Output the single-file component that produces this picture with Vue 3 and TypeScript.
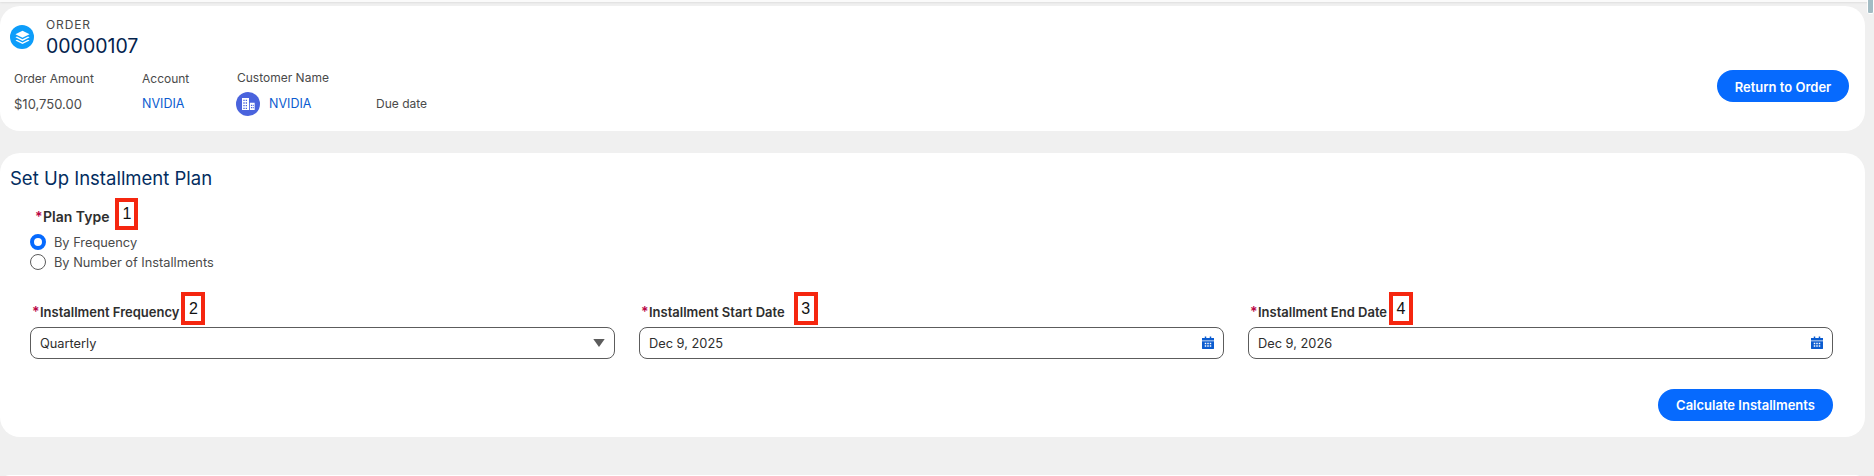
<script setup lang="ts">
interface Field { label: string; value: string; num: string; kind: 'select' | 'date'; tagGap: number }
const fields: Field[] = [
  { label: 'Installment Frequency', value: 'Quarterly', num: '2', kind: 'select', tagGap: 2 },
  { label: 'Installment Start Date', value: 'Dec 9, 2025', num: '3', kind: 'date', tagGap: 9 },
  { label: 'Installment End Date', value: 'Dec 9, 2026', num: '4', kind: 'date', tagGap: 2 },
]
</script>

<template>
  <div class="page">
    <div class="topbar"></div>
    <div class="thumb"></div>

    <section class="card head">
      <div class="head-main">
        <div class="title-row">
          <span class="order-icon">
            <svg viewBox="0 0 24 24" width="17" height="17" fill="#fff">
              <path d="M12 2.500 22 7.500l-10 5-10-5z" />
              <path d="M4.200 10.500 12 14.500l7.800-4L22 11.700 12 16.900 2 11.700z" />
              <path d="M4.200 15 12 19l7.800-4 2.200 1.200-10 5.100-10-5.100z" />
            </svg>
          </span>
          <div class="titles">
            <div class="eyebrow">ORDER</div>
            <div class="order-no">00000107</div>
          </div>
        </div>
        <div class="meta">
          <div class="col col-amount">
            <div class="meta-label">Order Amount</div>
            <div class="meta-value amount">$10,750.00</div>
          </div>
          <div class="col col-account">
            <div class="meta-label">Account</div>
            <div class="meta-value link">NVIDIA</div>
          </div>
          <div class="col col-customer">
            <div class="meta-label up">Customer Name</div>
            <div class="customer">
              <span class="avatar">
                <svg viewBox="0 0 24 24" width="16" height="16" fill="#fff">
                  <path fill-rule="evenodd" d="M3 3h10.500v18H3zM5 5.500v2h2v-2zm3.500 0v2h2v-2zM5 9.500v2h2v-2zm3.500 0v2h2v-2zM5 13.500v2h2v-2zm3.500 0v2h2v-2zM5 17.500v2h2v-2zm3.500 0v2h2v-2z" />
                  <path fill-rule="evenodd" d="M14.800 10H22v11h-7.200zm1.600 3v2H18v-2zm2.600 0v2h1.600v-2zm-2.600 3.500v2H18v-2zm2.600 0v2h1.600v-2z" />
                </svg>
              </span>
              <span class="link">NVIDIA</span>
            </div>
          </div>
          <div class="col col-due">
            <div class="meta-value">Due date</div>
          </div>
        </div>
      </div>
      <button class="btn return">Return to Order</button>
    </section>

    <section class="card plan">
      <h2 class="plan-title">Set Up Installment Plan</h2>
      <div class="plan-type">
        <div class="label-row type-label">
          <span class="star">*</span><span class="label type-text">Plan Type</span>
          <span class="tag tag-1">1</span>
        </div>
        <label class="radio-row"><span class="radio on"></span>By Frequency</label>
        <label class="radio-row"><span class="radio"></span>By Number of Installments</label>
      </div>

      <div class="fields">
        <div v-for="f in fields" :key="f.num" class="field">
          <div class="label-row">
            <span class="star">*</span><span class="label">{{ f.label }}</span>
            <span class="tag" :style="{ marginLeft: f.tagGap + 'px' }">{{ f.num }}</span>
          </div>
          <div class="input">
            <span>{{ f.value }}</span>
            <svg v-if="f.kind === 'select'" class="caret" viewBox="0 0 10 7" width="12" height="8" fill="#5c5c5c">
              <path d="M0 0h10L5 7z" />
            </svg>
            <svg v-else class="cal" viewBox="0 0 13 14" width="12" height="14" fill="#0b5cd0">
              <path fill-rule="evenodd" d="M3 0h1.600v1.600h3.800V0H10v1.600h3v2.600H0V1.600h3zM0 5h13v7.600a1 1 0 0 1-1 1H1a1 1 0 0 1-1-1zm3 1.800v1.500h1.600V6.800zm2.700 0v1.500h1.600V6.800zm2.700 0v1.500H10V6.800zM3 9.500V11h1.600V9.500zm2.700 0V11h1.600V9.500zm2.700 0V11H10V9.500z" />
            </svg>
          </div>
        </div>
      </div>

      <div class="actions">
        <button class="btn calc">Calculate Installments</button>
      </div>
    </section>

    <div class="card tail"></div>
  </div>
</template>

<style>
html, body { margin: 0; background: #f0f0f0; overflow: hidden; }
</style>

<style scoped>
.page {
  width: 1874px;
  height: 476px;
  background: #f0f0f0;
  font-family: Inter, "Liberation Sans", sans-serif;
  color: #444;
  position: relative;
  overflow: hidden;
  box-sizing: border-box;
}
.topbar {
  height: 2px;
  margin-bottom: 4px;
  background: #fafafa;
  box-shadow: 0 1px 2px #dedede;
}
.thumb {
  position: absolute;
  top: -3px;
  right: 0;
  width: 5px;
  height: 15px;
  background: #a3bcc4;
  border: 1px solid #fff;
  border-radius: 2px;
}
.card {
  width: 1865px;
  background: #fff;
  border-radius: 20px;
  box-sizing: border-box;
}
.head {
  height: 125px;
  display: flex;
  justify-content: space-between;
  align-items: flex-start;
  margin-bottom: 22px;
}
.head-main { display: flex; flex-direction: column; }
.title-row {
  display: flex;
  align-items: center;
  gap: 12px;
  padding: 10px 0 0 10px;
}
.order-icon, .avatar {
  width: 24px;
  height: 24px;
  border-radius: 50%;
  display: flex;
  align-items: center;
  justify-content: center;
  flex: none;
}
.order-icon { background: #0d9dfa; }
.avatar { background: #4a63dd; }
.eyebrow {
  font-size: 12px;
  line-height: 18px;
  letter-spacing: 0.9px;
  color: #4a4a4a;
}
.order-no {
  font-size: 19.500px;
  line-height: 24px;
  color: #03234d;
}
.meta { display: flex; margin-top: 12px; font-size: 12px; }
.col-amount { width: 128px; padding-left: 14px; }
.col-account { width: 95px; }
.col-customer { width: 139px; }
.col-due { padding-top: 25px; }
.meta-label { line-height: 18px; color: #4a4a4a; }
.meta-label.up { margin-top: -1px; margin-bottom: 1px; }
.meta-value { line-height: 18px; margin-top: 7px; color: #4a4a4a; }
.meta-value.amount { font-size: 13px; }
.col-due .meta-value { margin-top: 0; }
.link { color: #0b5cd0; font-size: 12.500px; }
.customer { display: flex; align-items: center; gap: 9px; margin-top: 5px; margin-left: -1px; line-height: 24px; }
.btn {
  border: 0;
  background: #066afe;
  color: #fff;
  height: 32px;
  border-radius: 16px;
  font-family: inherit;
  font-size: 13px;
  font-weight: 600;
  padding: 0;
  text-align: center;
}
.return { width: 132px; margin: 64px 16px 0 0; padding-top: 2px; }

.plan { height: 284px; padding: 13px 32px 0 30px; margin-bottom: 38px; }
.plan-title {
  margin: 0 0 0 -20px;
  font-size: 18.500px;
  line-height: 24px;
  font-weight: 400;
  color: #032d60;
}
.plan-type { margin-top: 8px; }
.label-row {
  display: flex;
  align-items: center;
  height: 33px;
  font-size: 13px;
}
.type-label { padding-left: 3px; height: 32px; margin-bottom: 2px; }
.star { color: #ba0546; font-size: 14px; font-weight: 600; width: 8px; flex: none; margin: 5px 0 0 2px; }
.label { font-weight: 600; color: #2e2e2e; margin-top: 7px; }
.type-text { font-size: 14px; margin-top: 5px; }
.tag {
  box-sizing: border-box;
  height: 33px;
  min-width: 24px;
  border: 4px solid #f5260f;
  background: #fff;
  display: inline-flex;
  align-items: center;
  justify-content: center;
  padding: 0 2px;
  font-family: "Liberation Sans", sans-serif;
  font-size: 16px;
  color: #111;
  margin-left: 6px;
}
.tag-1 { height: 32px; min-width: 23px; }
.radio-row {
  display: flex;
  align-items: center;
  gap: 8px;
  height: 20px;
  font-size: 12.800px;
  color: #4a4a4a;
}
.radio {
  width: 16px;
  height: 16px;
  box-sizing: border-box;
  border: 1px solid #5c5c5c;
  border-radius: 50%;
  background: #fff;
  flex: none;
}
.radio.on { border: 4px solid #066afe; }
.fields {
  display: grid;
  grid-template-columns: repeat(3, 585px);
  column-gap: 24px;
  margin-top: 20px;
}
.field { min-width: 0; }
.input {
  margin-top: 2px;
  height: 32px;
  box-sizing: border-box;
  border: 1px solid #5c5c5c;
  border-radius: 8px;
  background: #fff;
  display: flex;
  align-items: center;
  justify-content: space-between;
  padding: 0 9px;
  font-size: 12.800px;
  color: #2e2e2e;
}
.actions { display: flex; justify-content: flex-end; margin-top: 30px; }
.calc { width: 175px; }
.tail { height: 20px; }
</style>
